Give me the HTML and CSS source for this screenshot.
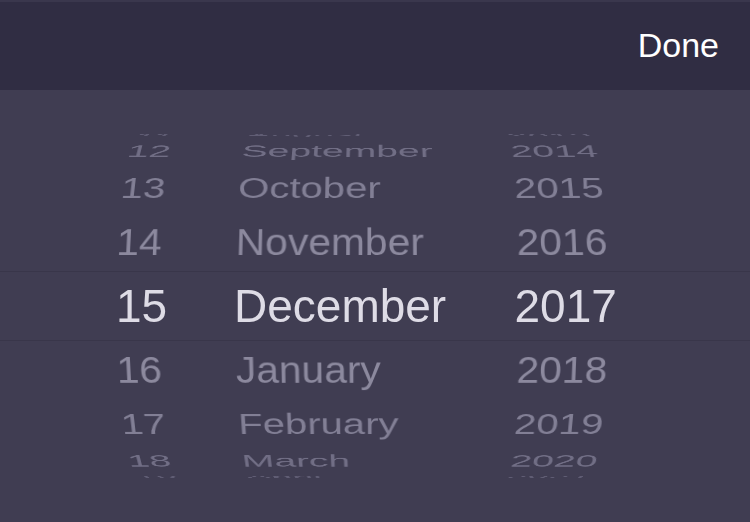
FILE: index.html
```html
<!DOCTYPE html>
<html lang="en">
<head>
<meta charset="utf-8">
<title>Date Picker</title>
<link rel="stylesheet" href="styles.css">
</head>
<body>
<div class="screen">
  <header class="toolbar">
    <span class="done">Done</span>
  </header>
  <section class="picker">
    <div class="wheel">
      <div class="band"></div>
      <div class="row up4"><span class="day">11</span><span class="month">August</span><span class="year">2013</span></div>
      <div class="row up3"><span class="day">12</span><span class="month">September</span><span class="year">2014</span></div>
      <div class="row up2"><span class="day">13</span><span class="month">October</span><span class="year">2015</span></div>
      <div class="row up1"><span class="day">14</span><span class="month">November</span><span class="year">2016</span></div>
      <div class="row sel"><span class="day">15</span><span class="month">December</span><span class="year">2017</span></div>
      <div class="row dn1"><span class="day">16</span><span class="month">January</span><span class="year">2018</span></div>
      <div class="row dn2"><span class="day">17</span><span class="month">February</span><span class="year">2019</span></div>
      <div class="row dn3"><span class="day">18</span><span class="month">March</span><span class="year">2020</span></div>
      <div class="row dn4"><span class="day">19</span><span class="month">April</span><span class="year">2021</span></div>
    </div>
  </section>
</div>
</body>
</html>
```

FILE: styles.css
```css
* { box-sizing: border-box; }
html, body {
  margin: 0;
  padding: 0;
  background: #403d52;
}
body {
  font-family: "Liberation Sans", Arial, sans-serif;
  width: 750px;
  height: 522px;
  overflow: hidden;
}
.screen {
  width: 750px;
  height: 522px;
  display: flex;
  flex-direction: column;
}
.toolbar {
  height: 90px;
  background: #302d43;
  border-top: 2px solid #3a374d;
  display: flex;
  align-items: center;
  justify-content: flex-end;
  padding-right: 31px;
}
.done {
  color: #ffffff;
  font-size: 34px;
  line-height: 40px;
  margin-top: -3px;
}
.picker {
  flex: 1;
  background: #403d52;
  padding: 38px 0;
}
.wheel {
  height: 356px;
  overflow: hidden;
  display: grid;
  grid-template-columns: 750px;
  grid-template-rows: 356px;
  align-items: center;
  perspective: 1850px;
  perspective-origin: 375px 178px;
}
.band {
  grid-area: 1 / 1;
  height: 70px;
  border-top: 1px solid #39364a;
  border-bottom: 1px solid #39364a;
}
.row {
  grid-area: 1 / 1;
  height: 64px;
  line-height: 64px;
  font-size: 41px;
  white-space: nowrap;
  display: grid;
  grid-template-columns: 120px 282.5px auto;
  padding-left: 115px;
  color: #8e8ba0;
  backface-visibility: hidden;
  transform-origin: 50% 50%;
}
.row.sel {
  font-size: 46px;
  grid-template-columns: 118px 280.5px auto;
  padding-left: 116px;
  color: #dedce6;
}
.up1 { transform: translateZ(-188px) rotateX(20deg) translateZ(188px); color: #8c899e; }
.up2 { transform: translateZ(-188px) rotateX(40deg) translateZ(188px); color: #827f95; }
.up3 { transform: translateZ(-188px) rotateX(60deg) translateZ(188px); color: #716e85; }
.up4 { transform: translateZ(-188px) rotateX(80deg) translateZ(188px); color: #605d74; }
.dn1 { transform: translateZ(-188px) rotateX(-20deg) translateZ(188px); color: #8c899e; }
.dn2 { transform: translateZ(-188px) rotateX(-40deg) translateZ(188px); color: #827f95; }
.dn3 { transform: translateZ(-188px) rotateX(-60deg) translateZ(188px); color: #716e85; }
.dn4 { transform: translateZ(-188px) rotateX(-80deg) translateZ(188px); color: #605d74; }
```
